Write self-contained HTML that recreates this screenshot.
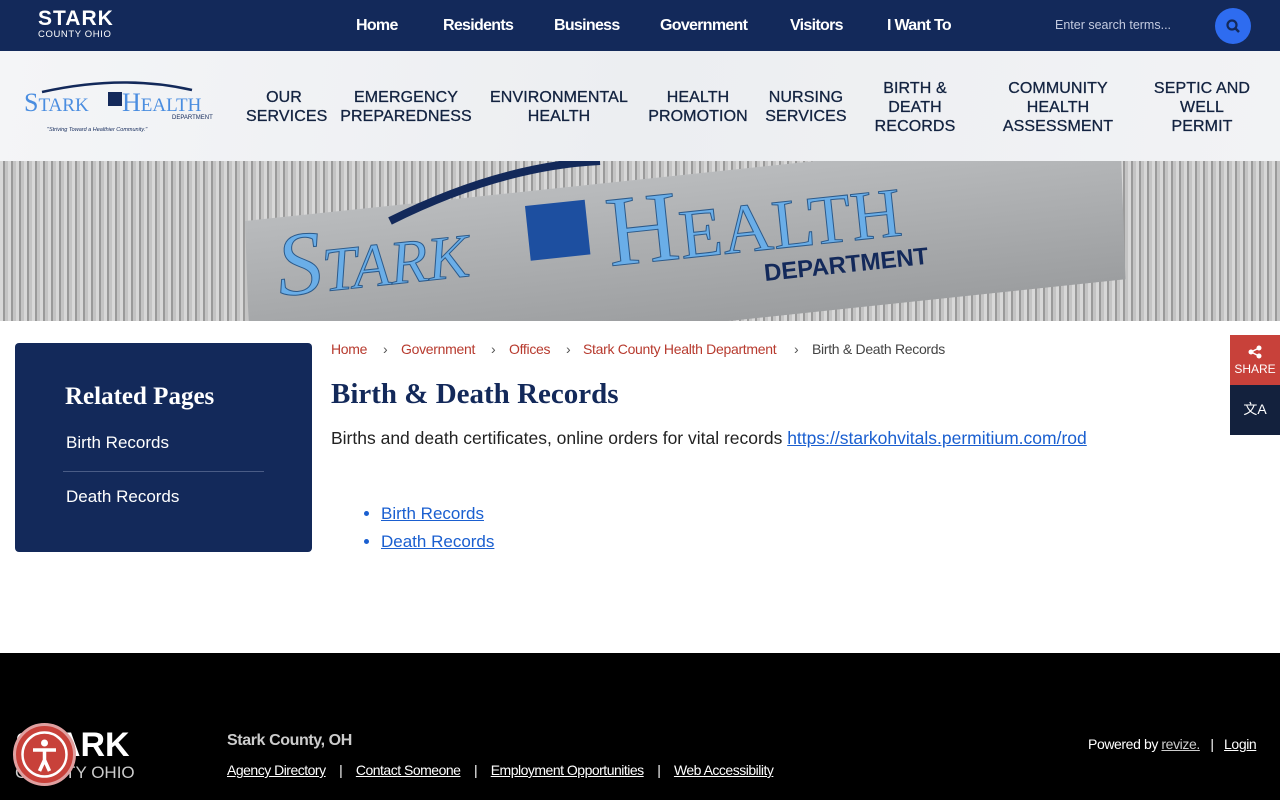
<!DOCTYPE html>
<html><head><meta charset="utf-8"><style>
*{margin:0;padding:0;box-sizing:border-box}
body{width:1280px;height:800px;overflow:hidden;font-family:"Liberation Sans",sans-serif;background:#fff;position:relative}
.top{position:absolute;left:0;top:0;width:1280px;height:51px;background:#13295a;color:#fff}
.logo1{position:absolute;left:38px;top:8px;font-weight:bold;font-size:21px;letter-spacing:1px;line-height:21px}
.logo1 small{display:block;font-size:9.5px;font-weight:normal;letter-spacing:.6px;line-height:12px}
.tnav a{position:absolute;top:17px;color:#fff;font-weight:bold;font-size:16px;text-decoration:none;letter-spacing:-.7px}
.search{position:absolute;left:1055px;top:18px;font-size:12.5px;color:#c4cbe0}
.sbtn{position:absolute;left:1215px;top:8px;width:36px;height:36px;border-radius:50%;background:#2e6cf0}
.hdr{position:absolute;left:0;top:51px;width:1280px;height:110px;background:linear-gradient(100deg,#f4f5f7,#eceef1 50%,#f2f3f5)}
.mnav div{position:absolute;text-align:center;color:#132340;font-size:16px;line-height:19px;letter-spacing:.1px;-webkit-text-stroke:.3px #132340}
.banner{position:absolute;left:0;top:161px;width:1280px;height:160px;background:repeating-linear-gradient(90deg,#d8d8d8 0 3px,#9a9a9a 3px 5px,#c4c4c4 5px 8px);overflow:hidden}
.sign{position:absolute;left:245px;top:150px;width:880px;height:150px;background:linear-gradient(#b9bbbd,#9c9ea0);transform:rotate(-6deg) skewX(-4deg);transform-origin:0 0}
.side{position:absolute;left:15px;top:343px;width:297px;height:209px;background:#13295a;border-radius:4px;color:#fff}
.crumb{position:absolute;top:341px;font-size:14px;color:#b73a2e;letter-spacing:-.3px}
.ft{position:absolute;left:0;top:653px;width:1280px;height:147px;background:#000;color:#fff}
.ft a{color:#fff;text-decoration:underline}
</style></head><body>
<div class="top">
<div class="logo1">STARK<small>COUNTY OHIO</small></div>
<div class="tnav"><a style="left:356px">Home</a><a style="left:443px">Residents</a><a style="left:554px">Business</a><a style="left:660px">Government</a><a style="left:790px">Visitors</a><a style="left:887px">I Want To</a></div>
<div class="search">Enter search terms...</div>
<div class="sbtn"><svg width="36" height="36" viewBox="0 0 36 36"><circle cx="17" cy="17" r="4.5" fill="none" stroke="#13295a" stroke-width="2.2"/><path d="M20 20l4 4" stroke="#13295a" stroke-width="2.5"/></svg></div>
</div>
<div class="hdr">
<svg style="position:absolute;left:22px;top:27px" width="195" height="57" viewBox="0 0 195 57"><path d="M20 14Q100-4 170 12" fill="none" stroke="#13295a" stroke-width="2.5"/><text x="2" y="33" font-family="Liberation Serif" font-size="26" fill="#4a8de0">S<tspan font-size="19">TARK</tspan></text><rect x="86" y="14" width="14" height="14" fill="#13295a"/><text x="100" y="33" font-family="Liberation Serif" font-size="26" fill="#4a8de0">H<tspan font-size="19">EALTH</tspan></text><text x="150" y="41" font-size="6" fill="#13295a">DEPARTMENT</text><text x="25" y="53" font-size="5.5" font-style="italic" fill="#13295a">"Striving Toward a Healthier Community."</text></svg>
<div class="mnav">
<div style="left:246px;top:37px;width:76px">OUR<br>SERVICES</div>
<div style="left:338px;top:37px;width:136px">EMERGENCY<br>PREPAREDNESS</div>
<div style="left:486px;top:37px;width:146px">ENVIRONMENTAL<br>HEALTH</div>
<div style="left:644px;top:37px;width:108px">HEALTH<br>PROMOTION</div>
<div style="left:764px;top:37px;width:84px">NURSING<br>SERVICES</div>
<div style="left:870px;top:28px;width:90px">BIRTH &amp;<br>DEATH<br>RECORDS</div>
<div style="left:998px;top:28px;width:120px">COMMUNITY<br>HEALTH<br>ASSESSMENT</div>
<div style="left:1150px;top:28px;width:104px">SEPTIC AND<br>WELL<br>PERMIT</div>
</div></div>
<div class="banner">
<div class="sign" style="top:60px"></div>
<svg style="position:absolute;left:270px;top:0" width="760" height="160"><path d="M120 60Q230 5 330 0" fill="none" stroke="#13295a" stroke-width="8"/><text x="10" y="135" font-family="Liberation Serif" font-size="90" font-style="italic" fill="#6aaee8" stroke="#2c5a8a" stroke-width="1" transform="rotate(-6 10 135)">S<tspan font-size="62">TARK</tspan></text><rect x="255" y="45" width="60" height="55" fill="#1d4fa0" transform="rotate(-6 255 45)"/><text x="340" y="105" font-family="Liberation Serif" font-size="100" fill="#6aaee8" stroke="#2c5a8a" transform="rotate(-6 340 105)">H<tspan font-size="70">EALTH</tspan></text><text x="495" y="120" font-family="Liberation Sans" font-weight="bold" font-size="24" fill="#13295a" transform="rotate(-6 495 120)">DEPARTMENT</text></svg>
</div>
<div class="side">
<div style="position:absolute;left:50px;top:40px;font-family:'Liberation Serif',serif;font-weight:bold;font-size:25px">Related Pages</div>
<div style="position:absolute;left:51px;top:90px;font-size:17px">Birth Records</div>
<div style="position:absolute;left:48px;top:128px;width:201px;height:1px;background:#4a5c86"></div>
<div style="position:absolute;left:51px;top:144px;font-size:17px">Death Records</div>
</div>
<div class="crumb" style="left:331px">Home</div><div class="crumb" style="left:383px;color:#555">›</div>
<div class="crumb" style="left:401px">Government</div><div class="crumb" style="left:491px;color:#555">›</div>
<div class="crumb" style="left:509px">Offices</div><div class="crumb" style="left:566px;color:#555">›</div>
<div class="crumb" style="left:583px">Stark County Health Department</div><div class="crumb" style="left:794px;color:#555">›</div>
<div class="crumb" style="left:812px;color:#444">Birth &amp; Death Records</div>
<div style="position:absolute;left:331px;top:378px;font-family:'Liberation Serif',serif;font-weight:bold;font-size:29px;color:#13295a">Birth &amp; Death Records</div>
<div style="position:absolute;left:331px;top:428px;font-size:17.5px;color:#222;white-space:nowrap">Births and death certificates, online orders for vital records <a style="color:#1a5fd0;text-decoration:underline">https://starkohvitals.permitium.com/rod</a></div>
<ul style="position:absolute;left:381px;top:500px;font-size:17px;line-height:28px;color:#1a5fd0"><li><a style="text-decoration:underline">Birth Records</a></li><li><a style="text-decoration:underline">Death Records</a></li></ul>
<div style="position:absolute;left:1230px;top:335px;width:50px;height:50px;background:#c8413a;color:#fff;text-align:center;font-size:12px;padding-top:10px"><svg width="14" height="14" viewBox="0 0 14 14"><circle cx="11" cy="3" r="2.5" fill="#fff"/><circle cx="3" cy="7" r="2.5" fill="#fff"/><circle cx="11" cy="11" r="2.5" fill="#fff"/><path d="M11 3L3 7l8 4" stroke="#fff" stroke-width="1.5" fill="none"/></svg><br>SHARE</div>
<div style="position:absolute;left:1230px;top:385px;width:50px;height:50px;background:#13213d;color:#fff;text-align:center;font-size:14px;padding-top:14px">文A</div>
<div class="ft">
<div style="position:absolute;left:15px;top:74px;font-size:34px;font-weight:bold;line-height:36px">STARK</div>
<div style="position:absolute;left:15px;top:110px;font-size:17px;color:#ccc">COUNTY OHIO</div>
<div style="position:absolute;left:13px;top:70px;width:63px;height:63px;border-radius:50%;background:#c8413a;border:3px solid #e0a0a0"><svg width="57" height="57" viewBox="0 0 57 57"><circle cx="28.5" cy="28.5" r="22" fill="none" stroke="#fff" stroke-width="2.5"/><circle cx="28.5" cy="17" r="3.5" fill="#fff"/><path d="M17 24h23M28.5 24v10l-5 11M28.5 34l5 11" stroke="#fff" stroke-width="3.5" fill="none"/></svg></div>
<div style="position:absolute;left:227px;top:79px;font-size:16px;color:#ccc;font-weight:bold;letter-spacing:-.4px">Stark County, OH</div>
<div style="position:absolute;left:227px;top:109px;font-size:14px;letter-spacing:-.5px;white-space:nowrap"><a>Agency Directory</a> &nbsp;&nbsp; | &nbsp;&nbsp; <a>Contact Someone</a> &nbsp;&nbsp; | &nbsp;&nbsp; <a>Employment Opportunities</a> &nbsp;&nbsp; | &nbsp;&nbsp; <a>Web Accessibility</a></div>
<div style="position:absolute;left:1088px;top:83px;font-size:14px;letter-spacing:-.4px">Powered by <a style="color:#ccc">revize.</a> &nbsp; | &nbsp; <a>Login</a></div>
</div>
</body></html>
